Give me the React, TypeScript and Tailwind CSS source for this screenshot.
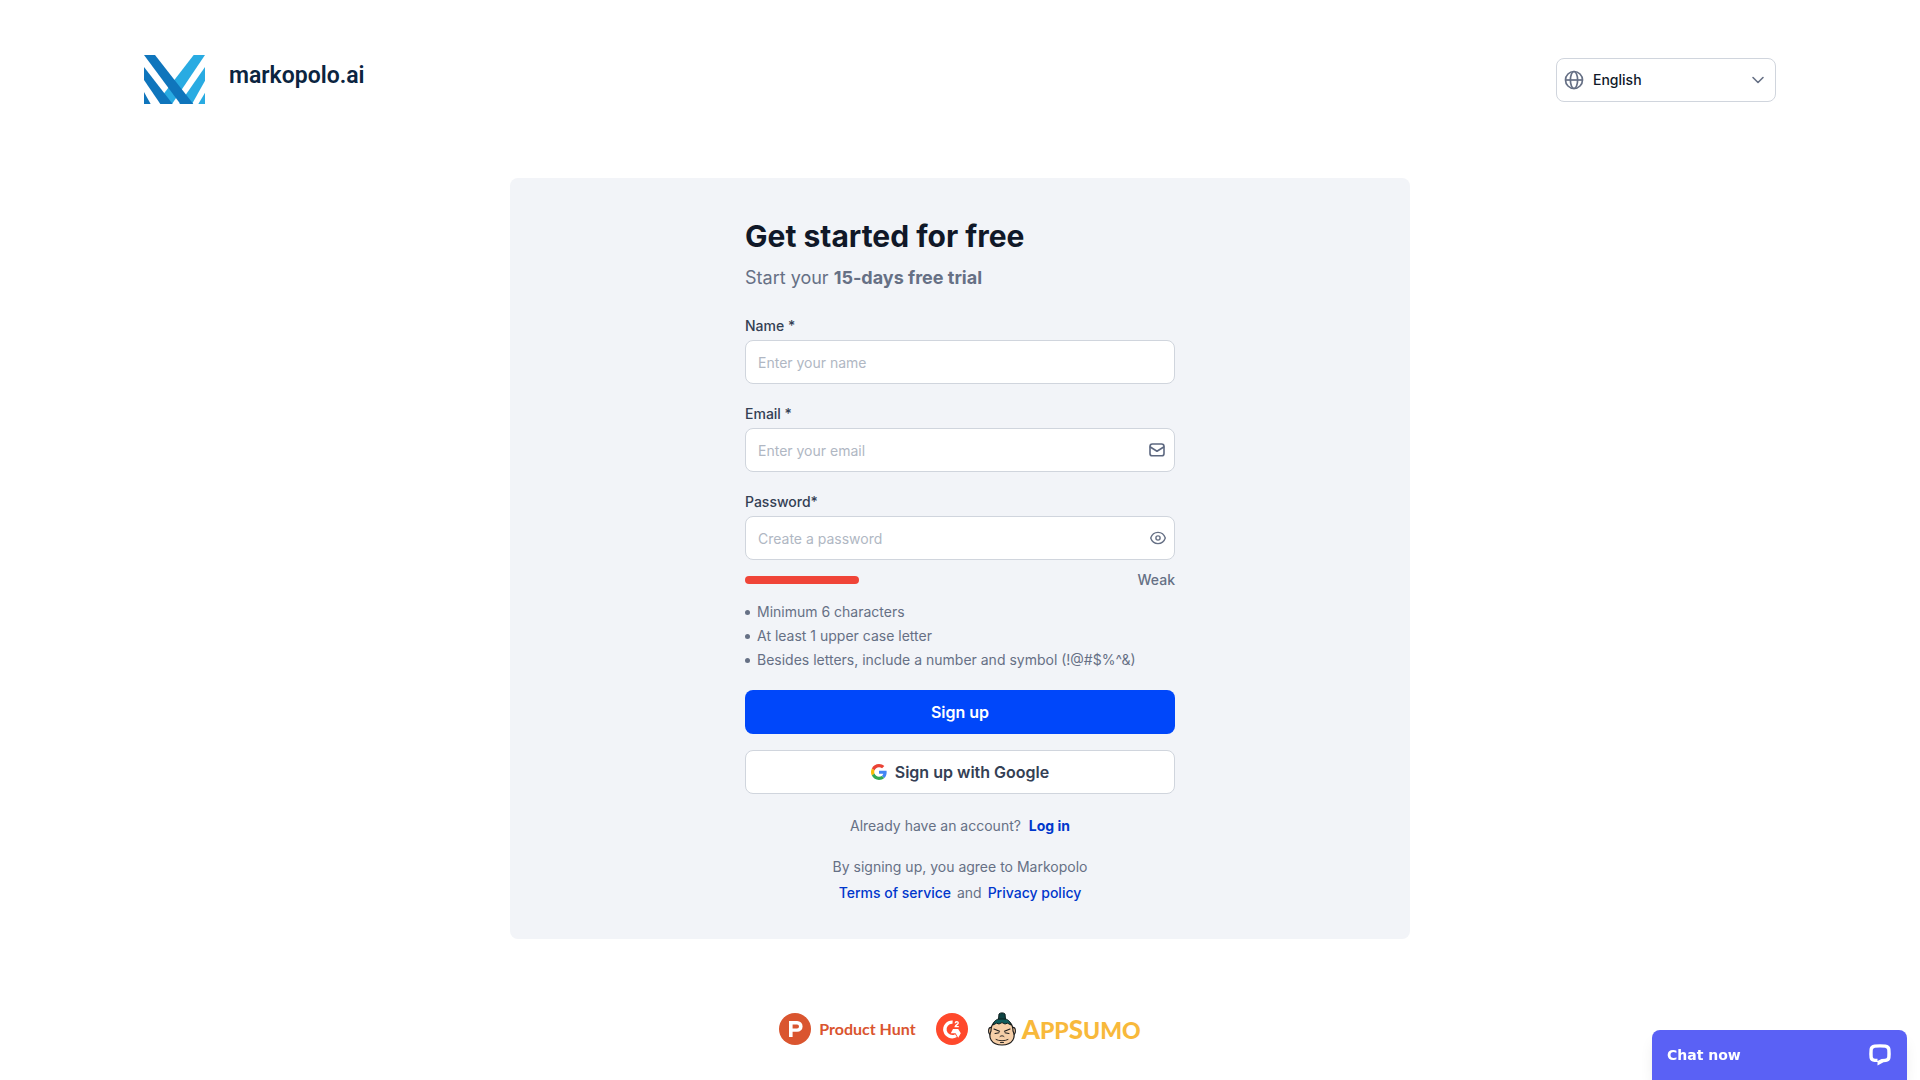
import { useState } from "react";
import type { ReactNode } from "react";

function MarkopoloMark() {
  return (
    <svg viewBox="0 0 183 147" className="h-[49px] w-[61px]" aria-hidden="true">
      <g fill="#29abe2">
        <path d="M149 0H183L84 147L58 118Z" />
        <path d="M183 36V77L144 147H106Z" />
        <path d="M183 113V147H163Z" />
      </g>
      <g fill="#0f75bc">
        <path d="M0 36L86 147H49L0 75Z" />
        <path d="M0 111L20 147H0Z" />
        <path d="M0 0H33L148 147H109Z" />
      </g>
    </svg>
  );
}

function GlobeIcon() {
  return (
    <svg viewBox="0 0 20 20" className="size-5" fill="none" stroke="#667085" strokeWidth="1.7" aria-hidden="true">
      <circle cx="10" cy="10" r="8.5" />
      <ellipse cx="10" cy="10" rx="3.6" ry="8.5" />
      <path d="M1.5 10H18.5" />
    </svg>
  );
}

function ChevronIcon() {
  return (
    <svg viewBox="0 0 14 8" className="h-2 w-3.5" fill="none" stroke="#667085" strokeWidth="1.6" strokeLinecap="round" strokeLinejoin="round" aria-hidden="true">
      <path d="M2 1.5L7 6.5L12 1.5" />
    </svg>
  );
}

function MailIcon() {
  return (
    <svg viewBox="0 0 16 14" className="h-3.5 w-4" fill="none" stroke="#5d6880" strokeWidth="1.6" strokeLinecap="round" strokeLinejoin="round" aria-hidden="true">
      <rect x="1" y="1" width="14" height="11.8" rx="2.4" />
      <path d="M1.3 4L8 8.2L14.7 4" />
    </svg>
  );
}

function EyeIcon() {
  return (
    <svg viewBox="0 0 16 14" className="h-3.5 w-4" fill="none" stroke="#667085" strokeWidth="1.4" aria-hidden="true">
      <path d="M.7 7C2 3.2 4.8 1.4 8 1.4S14 3.2 15.3 7C14 10.8 11.2 12.6 8 12.6S2 10.8.7 7Z" />
      <circle cx="8" cy="7" r="2.1" />
    </svg>
  );
}

function GoogleIcon() {
  return (
    <svg viewBox="0 0 48 48" className="size-4" aria-hidden="true">
      <path fill="#EA4335" d="M24 9.5c3.54 0 6.71 1.22 9.21 3.6l6.85-6.85C35.9 2.38 30.47 0 24 0 14.62 0 6.51 5.38 2.56 13.22l7.98 6.19C12.43 13.72 17.74 9.5 24 9.5z" />
      <path fill="#4285F4" d="M46.98 24.55c0-1.57-.15-3.09-.38-4.55H24v9.02h12.94c-.58 2.96-2.26 5.48-4.78 7.18l7.73 6c4.51-4.18 7.09-10.36 7.09-17.65z" />
      <path fill="#FBBC05" d="M10.53 28.59c-.48-1.45-.76-2.99-.76-4.59s.27-3.14.76-4.59l-7.98-6.19C.92 16.46 0 20.12 0 24c0 3.88.92 7.54 2.56 10.78l7.97-6.19z" />
      <path fill="#34A853" d="M24 48c6.48 0 11.93-2.13 15.89-5.81l-7.73-6c-2.15 1.45-4.92 2.3-8.16 2.3-6.26 0-11.57-4.22-13.47-9.91l-7.98 6.19C6.51 42.62 14.62 48 24 48z" />
    </svg>
  );
}

function ProductHuntIcon() {
  return (
    <svg viewBox="0 0 32 32" className="size-8" aria-hidden="true">
      <circle cx="16" cy="16" r="16" fill="#da552f" />
      <path fill="#fff" fillRule="evenodd" d="M10 8H18.2A5.4 5.4 0 0 1 18.2 18.8H13.6V24H10ZM13.6 11.4V15.4H18A2 2 0 0 0 18 11.4Z" />
    </svg>
  );
}

function G2Icon() {
  return (
    <svg viewBox="0 0 32 32" className="size-8" aria-hidden="true">
      <circle cx="16" cy="16" r="16" fill="#ff492c" />
      <path d="M16.6 9.1A7.3 7.3 0 1 0 20 22.6" fill="none" stroke="#fff" strokeWidth="3.4" />
      <path d="M17 16H22.2L24.8 20.3L22.2 24.8L19.6 20.3H14.8Z" fill="#fff" />
      <path d="M19.2 10.2C19.3 8.2 22.4 8.3 22.2 10.1C22.1 11.3 19.5 12 19.2 13.6H22.8" fill="none" stroke="#fff" strokeWidth="1.3" />
    </svg>
  );
}

function SumoIcon() {
  return (
    <svg viewBox="0 0 28 34" className="h-[34px] w-7" aria-hidden="true">
      <ellipse cx="3" cy="19" rx="2.4" ry="3.6" fill="#f4c9a0" stroke="#1b1b1b" strokeWidth="1.1" />
      <ellipse cx="25" cy="19" rx="2.4" ry="3.6" fill="#f4c9a0" stroke="#1b1b1b" strokeWidth="1.1" />
      <path d="M3 19C3 11 8 8 14 8S25 11 25 19C28 25 25 33 14 33S0 25 3 19Z" fill="#f6cfa8" stroke="#1b1b1b" strokeWidth="1.2" />
      <path d="M5 13C6 8 10 6.5 14 6.5S22 8 23 13L19.5 11.2L17 12L14 10.6L11 12L8.5 11.2Z" fill="#0f5c5c" stroke="#10201f" strokeWidth="1" />
      <path d="M10.5 7L11 2C12 .5 16 .5 17 2L17.5 7Z" fill="#0e4444" stroke="#10201f" strokeWidth="1" />
      <g fill="none" stroke="#1b1b1b" strokeLinecap="round">
        <path d="M6 17L11.5 19.2M22 17L16.500 19.2" strokeWidth="1.2" />
        <path d="M7 21.500L11 20.8M21 21.500L17 20.8" strokeWidth="1" />
        <path d="M12 24.500C13 23.500 15 23.500 16 24.500M8 27.500C11 29.200 17 29.200 20 27.500M12.500 30.500H15.500" strokeWidth=".9" />
      </g>
    </svg>
  );
}

function ChatIcon() {
  return (
    <svg viewBox="0 0 22 22" className="size-[22px]" aria-hidden="true">
      <path
        fill="#fff"
        fillRule="evenodd"
        d="M5.500 .5Q11 0 16.500 .5Q21 1 21.500 5Q22 9.500 21.500 14Q21 17.500 17 18L14.500 18.200L8.500 21.500V18H5.500Q1 17.500 .5 14Q0 9.500 .5 5Q1 1 5.500 .5ZM6 3.700Q4 4 3.800 5.800Q3.500 9.500 3.800 13Q4 14.600 6 14.800H8.500V17L12.500 14.900L16 14.700Q18 14.500 18.200 13Q18.500 9.500 18.200 5.800Q18 4 16 3.700Q11 3.300 6 3.700Z"
      />
    </svg>
  );
}

type FieldProps = {
  id: string;
  label: string;
  type: string;
  placeholder: string;
  children?: ReactNode;
};

function Field({ id, label, type, placeholder, children }: FieldProps) {
  return (
    <div>
      <label htmlFor={id} className="block text-sm leading-5 font-medium text-[#344054]">
        {label}
      </label>
      <div className="relative mt-1">
        <input
          id={id}
          type={type}
          placeholder={placeholder}
          className="h-11 w-full rounded-lg border border-[#d0d5dd] bg-white pr-10 pl-3 text-sm text-[#101828] placeholder:text-[#b0b7c3]"
        />
        {children}
      </div>
    </div>
  );
}

const rules = [
  "Minimum 6 characters",
  "At least 1 upper case letter",
  "Besides letters, include a number and symbol (!@#$%^&)",
];

export default function App() {
  const [visible, setVisible] = useState(false);

  return (
    <div className="flex min-h-screen flex-col bg-white font-['Inter',sans-serif] text-[#667085]">
      <header className="flex items-center justify-between px-36 pt-[55px]">
        <a href="#" className="flex items-center gap-6">
          <MarkopoloMark />
          <span className="pb-1.5 font-['Roboto',sans-serif] text-[23px] font-semibold text-[#0b2440]">markopolo.ai</span>
        </a>
        <div className="relative w-[220px]">
          <select
            aria-label="Language"
            className="h-11 w-full appearance-none rounded-lg border border-[#d0d5dd] bg-white pr-9 pl-9 text-sm font-medium text-[#101828]"
          >
            <option>English</option>
          </select>
          <span className="pointer-events-none absolute inset-y-0 left-2 flex items-center">
            <GlobeIcon />
          </span>
          <span className="pointer-events-none absolute inset-y-0 right-[11px] flex items-center">
            <ChevronIcon />
          </span>
        </div>
      </header>

      <main className="mx-auto mt-[74px] w-full max-w-[900px] rounded-lg bg-[#f2f4f8] pt-9 pb-[33px]">
        <form className="mx-auto max-w-[430px]" onSubmit={(e) => e.preventDefault()}>
          <h1 className="text-3xl leading-11 font-bold text-[#101828]">Get started for free</h1>
          <p className="mt-1 text-lg leading-8">
            Start your <strong className="font-bold">15-days free trial</strong>
          </p>

          <div className="mt-[22px] flex flex-col gap-5">
            <Field id="name" label="Name *" type="text" placeholder="Enter your name" />
            <Field id="email" label="Email *" type="email" placeholder="Enter your email">
              <span className="pointer-events-none absolute inset-y-0 right-2.5 flex items-center">
                <MailIcon />
              </span>
            </Field>
            <Field id="password" label="Password*" type={visible ? "text" : "password"} placeholder="Create a password">
              <button
                type="button"
                aria-label="Show password"
                onClick={() => setVisible(!visible)}
                className="absolute inset-y-0 right-[9px] flex items-center"
              >
                <EyeIcon />
              </button>
            </Field>
          </div>

          <div className="mt-2.5 flex items-center justify-between">
            <div className="h-2 w-[114px] rounded-full bg-[#f04438]" />
            <span className="text-sm leading-5 font-medium">Weak</span>
          </div>

          <ul className="mt-2.5 text-sm leading-6">
            {rules.map((rule) => (
              <li key={rule} className="flex items-center gap-[7px]">
                <span className="size-[5px] rounded-full bg-[#667085]" />
                {rule}
              </li>
            ))}
          </ul>

          <button type="submit" className="mt-[18px] h-11 w-full rounded-lg bg-[#0047fa] text-base font-semibold text-white">
            Sign up
          </button>
          <button
            type="button"
            className="mt-4 flex h-11 w-full items-center justify-center gap-2 rounded-lg border border-[#d0d5dd] bg-white text-base font-semibold text-[#344054]"
          >
            <GoogleIcon />
            Sign up with Google
          </button>

          <p className="mt-5 text-center text-sm leading-6">
            Already have an account?{" "}
            <a href="#" className="ml-1 font-bold text-[#0037cc]">Log in</a>
          </p>
          <p className="mt-4 text-center text-sm leading-[26px]">
            By signing up, you agree to Markopolo
            <br />
            <a href="#" className="mr-0.5 font-medium text-[#0037cc]">Terms of service</a> and{" "}
            <a href="#" className="ml-0.5 font-medium text-[#0037cc]">Privacy policy</a>
          </p>
        </form>
      </main>

      <footer className="mt-[73px] flex items-center justify-center gap-5">
        <a href="#" className="flex items-center gap-2 font-['Lato',sans-serif] text-base font-bold text-[#da552f]">
          <ProductHuntIcon />
          Product Hunt
        </a>
        <a href="#" aria-label="G2">
          <G2Icon />
        </a>
        <a href="#" className="flex items-center gap-1.5 font-['Lato',sans-serif] text-[23px] leading-none font-black text-[#f8b93b]">
          <SumoIcon />
          <span>
            <span className="text-[26px]">A</span>PP<span className="text-[26px]">S</span>UMO
          </span>
        </a>
      </footer>

      <button
        type="button"
        className="fixed right-[13px] bottom-0 flex h-[50px] w-[255px] items-center justify-between rounded-t-lg bg-[#5a61f5] pr-4 pl-[15px] font-['DejaVu_Sans',sans-serif] text-sm font-bold text-white shadow-lg"
      >
        Chat now
        <ChatIcon />
      </button>
    </div>
  );
}
